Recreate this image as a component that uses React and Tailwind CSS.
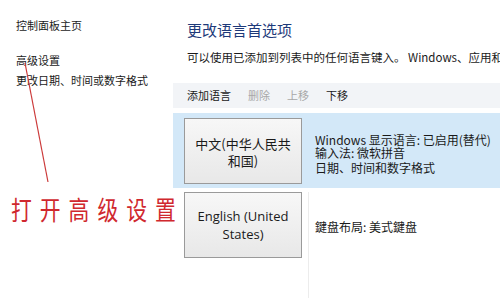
import React from "react";

const font = { fontFamily: '"Noto Sans CJK SC", "Noto Sans", sans-serif' };

export default function App() {
  return (
    <div className="relative w-[500px] h-[298px] overflow-hidden bg-white flex text-[#1a1a1a]" style={font}>
      <div className="w-[173px] shrink-0 flex flex-col pl-[16px] pt-[16px] text-[11px]">
        <div className="leading-[18px]">控制面板主页</div>
        <div className="leading-[18px] mt-[17px]">高级设置</div>
        <div className="leading-[18px] mt-[2px] whitespace-nowrap">更改日期、时间或数字格式</div>
        <div className="mt-[106px] -ml-[5px] whitespace-nowrap text-[26px] leading-[28px] tracking-[10px] text-[#d0282e] scale-x-[0.8] origin-left">
          打开高级设置
        </div>
      </div>
      <div className="flex-1 flex flex-col min-w-0">
        <div className="pl-[14px] pt-[19px] text-[15px] leading-[22px] text-[#1e3a7a] whitespace-nowrap">更改语言首选项</div>
        <div className="pl-[14px] mt-[7px] text-[11.5px] leading-[18px] whitespace-nowrap overflow-hidden">
          可以使用已添加到列表中的任何语言键入。 Windows、应用和网站将以列表中受支持的第一种语言显示。
        </div>
        <div className="mt-[17px] h-[25px] bg-[#f2f4f7] flex items-center pl-[14px] gap-[17px] text-[11px] whitespace-nowrap">
          <span>添加语言</span>
          <span className="text-[#a8a8a8]">删除</span>
          <span className="text-[#a8a8a8]">上移</span>
          <span>下移</span>
        </div>
        <div className="mt-[5px] h-[75px] bg-[#d3e8f8] flex items-center pl-[11px]">
          <div className="w-[118px] h-[66px] border border-[#9a9a9a] bg-gradient-to-b from-[#f7f7f7] to-[#e8e8e8] flex flex-col items-center justify-center text-[13px] leading-[17px] text-center pt-[2px]">
            <span>中文(中华人民共</span>
            <span>和国)</span>
          </div>
          <div className="ml-[13px] flex flex-col text-[12px] leading-[13px] whitespace-nowrap pt-[5px]">
            <span>Windows 显示语言: 已启用(替代)</span>
            <span>输入法: 微软拼音</span>
            <span className="mt-[2px]">日期、时间和数字格式</span>
          </div>
        </div>
        <div className="flex-1 flex pl-[11px] pt-[4px]">
          <div className="w-[118px] h-[66px] border border-[#9a9a9a] bg-gradient-to-b from-[#f7f7f7] to-[#e8e8e8] flex flex-col items-center justify-center text-[13px] leading-[18px] text-center" style={{ fontFamily: '"Open Sans", "Noto Sans", sans-serif' }}>
            <span>English (United</span>
            <span>States)</span>
          </div>
          <div className="ml-[6px] w-px bg-[#ececec] self-stretch"></div>
          <div className="ml-[6px] text-[12px] leading-[18px] pt-[26px] whitespace-nowrap">鍵盘布局: 美式鍵盘</div>
        </div>
      </div>
      <svg className="absolute left-0 top-0 pointer-events-none" width="500" height="298">
        <line x1="25" y1="63" x2="48" y2="182" stroke="#cc3a3a" strokeWidth="1.2" />
      </svg>
    </div>
  );
}
